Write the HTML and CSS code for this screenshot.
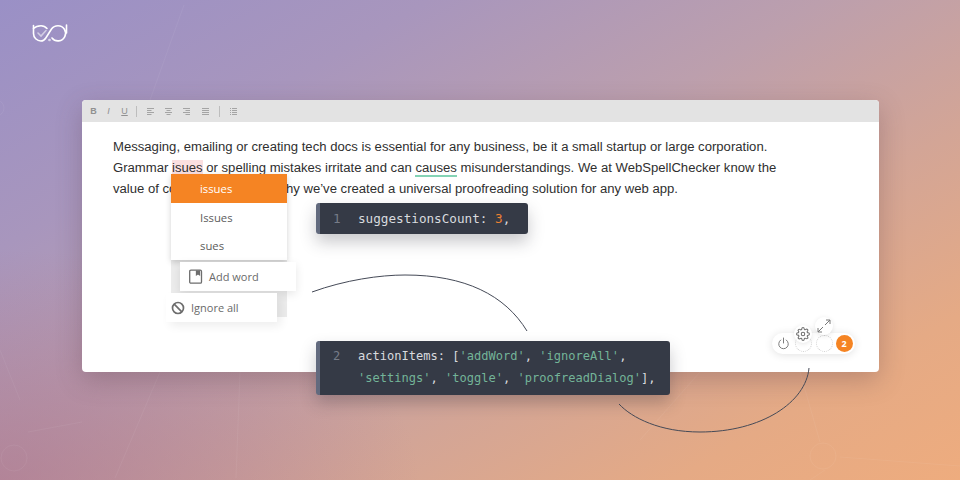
FILE: index.html
```html
<!DOCTYPE html>
<html lang="en">
<head>
<meta charset="utf-8">
<title>WebSpellChecker</title>
<link rel="stylesheet" href="styles.css">
</head>
<body>
<main class="stage">
  <svg class="mesh" width="960" height="480" viewBox="0 0 960 480" fill="none">
    <g stroke="#fff" stroke-opacity=".055">
      <path d="M184 5 150 100M0 350 20 400M28 432 82 422M115 478 160 372M236 478 240 372M800 372 820 442M840 457 960 466M810 480 825 470M700 372 640 440"/>
      <circle cx="14" cy="458" r="13"/><circle cx="823" cy="456" r="13"/><circle cx="-4" cy="108" r="8"/>
    </g>
  </svg>
  <svg class="logo" width="38" height="20" viewBox="0 0 38 20" fill="none" stroke="#fff" stroke-width="1.600" stroke-linecap="round">
    <path d="M2.500 1.500V9.500A7.500 7.500 0 0 0 10 17C12 17 13.500 16 14.800 14L20.500 5C22 2.800 24 1.700 27 1.700A7.600 7.600 0 1 1 21 14"/>
    <path d="M2.500 4.500C4.500 2.500 7 1.700 10 1.700 12.500 1.700 14.500 2.700 16 4.500M35.500 1V9"/>
    <path d="M7 9 10 12 15 6.500" stroke-opacity=".55"/>
    <circle cx="18.500" cy="16" r=".5" stroke-opacity=".7"/>
  </svg>

  <section class="window">
    <div class="toolbar">
      <b class="tool bold">B</b>
      <i class="tool ital">I</i>
      <u class="tool under">U</u>
      <span class="sep"></span>
      <svg class="align" width="7" height="7" viewBox="0 0 7 7"><path d="M0 .5h7M0 2.500h4.500M0 4.500h7M0 6.500h4.500"/></svg>
      <svg class="align" width="7" height="7" viewBox="0 0 7 7"><path d="M0 .5h7M1.500 2.500h4M0 4.500h7M1.500 6.500h4"/></svg>
      <svg class="align" width="7" height="7" viewBox="0 0 7 7"><path d="M0 .5h7M2.500 2.500h4.500M0 4.500h7M2.500 6.500h4.500"/></svg>
      <svg class="align align-last" width="7" height="7" viewBox="0 0 7 7"><path d="M0 .5h7M0 2.500h7M0 4.500h7M0 6.500h7"/></svg>
      <span class="sep sep-tight"></span>
      <svg class="align" width="7" height="7" viewBox="0 0 7 7"><path d="M0 .5h1M2 .5h5M0 2.500h1M2 2.500h5M0 4.500h1M2 4.500h5M0 6.500h1M2 6.500h5"/></svg>
    </div>
    <p class="copy">Messaging, emailing or creating tech docs is essential for any business, be it a small startup or large corporation. Grammar <span class="misspelt">isues</span> or spelling mistakes irritate and can <span class="grammar">causes</span> misunderstandings. We at WebSpellChecker know the value of correctness. That’s why we’ve created a universal proofreading solution for any web app.</p>
  </section>

  <div class="menu">
    <div class="suggestion active">issues</div>
    <div class="suggestion">Issues</div>
    <div class="suggestion">sues</div>
  </div>
  <div class="menu-track"></div>
  <div class="action add-word">
    <svg width="16" height="16" viewBox="0 0 16 16" fill="none" stroke="#6d6d6d" stroke-width="1.300"><rect x="1.700" y="1.200" width="11.800" height="13" rx="1.200"/><path d="M8.500 1.500v4.300l1.500-1 1.500 1V1.500" fill="#6d6d6d"/></svg>
    <span>Add word</span>
  </div>
  <div class="action ignore-all">
    <svg width="14" height="14" viewBox="0 0 14 14" fill="none" stroke="#6d6d6d" stroke-width="1.700"><circle cx="7" cy="7" r="5.500"/><path d="M3.200 3.200l7.600 7.600"/></svg>
    <span>Ignore all</span>
  </div>

  <svg class="curves" width="960" height="480" viewBox="0 0 960 480" fill="none" stroke="#454a57" stroke-width="1">
    <path d="M312 292C345 280 380 275 405 275 465 275 505 295 527 331"/>
    <path d="M809 368C806 402 762 432 700 432 660 432 632 418 619 404"/>
  </svg>

  <pre class="code code-one"><span class="num">1</span><span class="plain">suggestionsCount: </span><span class="val">3</span><span class="plain">,</span></pre>
  <pre class="code code-two"><span class="num">2</span><span class="plain">actionItems: [</span><span class="str">'addWord'</span><span class="plain">, </span><span class="str">'ignoreAll'</span><span class="plain">,</span>
<span class="str indent">'settings'</span><span class="plain">, </span><span class="str">'toggle'</span><span class="plain">, </span><span class="str">'proofreadDialog'</span><span class="plain">],</span></pre>

  <div class="badge">
    <svg class="power" width="13" height="13" viewBox="0 0 13 13" fill="none" stroke="#7d7d7d" stroke-width="1" stroke-linecap="round"><path d="M6.500 1v5M3.700 3A4.800 4.800 0 1 0 9.300 3"/></svg>
    <span class="slot"></span>
    <span class="slot"></span>
    <span class="count">2</span>
  </div>
  <div class="float gear">
    <svg width="14" height="14" viewBox="0 0 24 24" fill="none" stroke="#6f6f6f" stroke-width="1.800" stroke-linejoin="round"><circle cx="12" cy="12" r="3"/><path d="M19.400 15a1.650 1.650 0 0 0 .33 1.820l.06.06a2 2 0 1 1-2.830 2.830l-.06-.06a1.650 1.650 0 0 0-2.820 1.170V21a2 2 0 1 1-4 0v-.09a1.650 1.650 0 0 0-2.820-1.170l-.06.06a2 2 0 1 1-2.830-2.830l.06-.06A1.650 1.650 0 0 0 3.090 14H3a2 2 0 1 1 0-4h.09a1.650 1.650 0 0 0 1.170-2.820l-.06-.06a2 2 0 1 1 2.830-2.830l.06.06A1.650 1.650 0 0 0 10 3.090V3a2 2 0 1 1 4 0v.09a1.650 1.650 0 0 0 2.820 1.170l.06-.06a2 2 0 1 1 2.830 2.830l-.06.06A1.650 1.650 0 0 0 20.910 10H21a2 2 0 1 1 0 4h-.09a1.650 1.650 0 0 0-1.510 1z"/></svg>
  </div>
  <div class="float expand">
    <svg width="14" height="14" viewBox="0 0 14 14" fill="none" stroke="#777" stroke-width="1"><path d="M8 6l5-5M9 1h4v4M6 8l-5 5M1 9v4h4"/></svg>
  </div>
</main>
</body>
</html>
```
FILE: styles.css
```css
* { box-sizing: border-box; }
html, body { margin: 0; padding: 0; }
body { width: 960px; height: 480px; overflow: hidden; }

.stage {
  position: relative;
  width: 960px;
  height: 480px;
  padding: 100px 81px 108px 82px;
  overflow: hidden;
  background:
    linear-gradient(150deg, #9a90c6 0%, #a896bd 24%, #bc9fad 46%, #d3a596 66%, #e5aa85 84%, #eeac7e 100%);
}
.stage::before {
  content: "";
  position: absolute;
  inset: 0;
  background: radial-gradient(420px 230px at 0 480px, rgba(170, 110, 135, .55), rgba(170, 110, 135, 0));
}
.mesh, .logo, .curves { position: absolute; }
.mesh { left: 0; top: 0; }
.logo { left: 31px; top: 24px; }
.curves { left: 0; top: 0; z-index: 2; pointer-events: none; }

.window {
  position: relative;
  height: 272px;
  background: #fff;
  border-radius: 4px;
  overflow: hidden;
  box-shadow: 0 8px 26px rgba(90, 60, 70, .3);
}
.toolbar {
  display: flex;
  align-items: center;
  gap: 8px;
  height: 22px;
  padding-left: 8px;
  background: #e3e3e3;
}
.tool {
  width: 7px;
  font: 9px/10px "Liberation Sans", sans-serif;
  color: #909090;
  text-align: center;
}
.bold { font-weight: 700; }
.ital { font-style: italic; margin-right: 1px; }
.sep { width: 1px; height: 11px; background: #bdbdbd; margin: 0 2px 0 0; }
.sep-tight { margin: 0 2px 0 -1px; }
.align { stroke: #a4a4a4; stroke-width: 1; fill: none; margin-right: 3px; }
.align-last { margin-left: 1px; }

.copy {
  margin: 0;
  padding: 13.500px 0 0 31px;
  width: 711px;
  font: 13.120px/21px "Liberation Sans", Arial, sans-serif;
  color: #2f2f2f;
}
.misspelt { background: #fbdfe0; border-bottom: 2px solid #ee9a98; }
.grammar { border-bottom: 2px solid #84d3b5; }

.menu {
  position: absolute;
  left: 171px;
  top: 174px;
  width: 116px;
  z-index: 3;
  background: #fff;
  box-shadow: 0 2px 6px rgba(0, 0, 0, .18);
}
.suggestion {
  height: 28.500px;
  padding: 1px 0 0 29px;
  font: 11.300px/28px "Open Sans", sans-serif;
  color: #5c5c5c;
}
.suggestion.active { background: #f58423; color: #fff; }
.menu-track {
  position: absolute;
  left: 171px;
  top: 260px;
  width: 116px;
  height: 57px;
  z-index: 2;
  background: #ececec;
}
.action {
  position: absolute;
  z-index: 3;
  display: flex;
  align-items: center;
  background: #fff;
  font: 11px/1 "Open Sans", sans-serif;
  color: #6a6a6a;
}
.add-word { left: 180px; top: 262px; width: 116px; height: 29px; padding-left: 8px; gap: 5px; box-shadow: 0 3px 10px rgba(0, 0, 0, .1); }
.ignore-all { left: 166px; top: 293px; width: 111px; height: 29px; padding-left: 4px; gap: 6px; box-shadow: 4px 4px 10px rgba(0, 0, 0, .07); }
.ignore-all svg { margin-left: 1px; }

.code {
  position: absolute;
  z-index: 3;
  margin: 0;
  padding-left: 38px;
  background: #353a46;
  border-left: 4px solid #626a7e;
  border-radius: 3px;
  font-family: "DejaVu Sans Mono", monospace;
  line-height: 21.500px;
  color: #d8dade;
  box-shadow: 0 8px 16px rgba(40, 40, 50, .25);
  white-space: pre;
}
.code-one { left: 316px; top: 203px; width: 212px; height: 31px; padding-top: 5px; font-size: 12.650px; }
.code-two { left: 316px; top: 341px; width: 354px; height: 54px; padding-top: 5px; font-size: 12.060px; }
.num { position: absolute; left: 13px; color: #777c88; }
.plain { color: #d9dbdf; }
.val { color: #ee8132; }
.str { color: #73b498; }

.badge {
  position: absolute;
  left: 772px;
  top: 333px;
  width: 83px;
  height: 21px;
  z-index: 1;
  display: flex;
  align-items: center;
  padding-left: 5px;
  background: #fff;
  border-radius: 11px;
  box-shadow: 0 1px 8px rgba(0, 0, 0, .12);
}
.power { margin-right: 4.500px; }
.slot {
  width: 17px;
  height: 17px;
  margin-right: 4px;
  border: 1px dotted #cfcfcf;
  border-radius: 50%;
}
.count {
  width: 17px;
  height: 17px;
  margin-left: -1px;
  border-radius: 50%;
  background: #f58423;
  color: #fff;
  font: 700 9px/17px "Open Sans", sans-serif;
  text-align: center;
}
.float {
  position: absolute;
  z-index: 1;
  width: 18px;
  height: 18px;
  display: flex;
  align-items: center;
  justify-content: center;
  background: #fff;
  border-radius: 50%;
  box-shadow: 0 1px 5px rgba(0, 0, 0, .1);
}
.gear { left: 794px; top: 325px; }
.expand { left: 815px; top: 317px; }
```
